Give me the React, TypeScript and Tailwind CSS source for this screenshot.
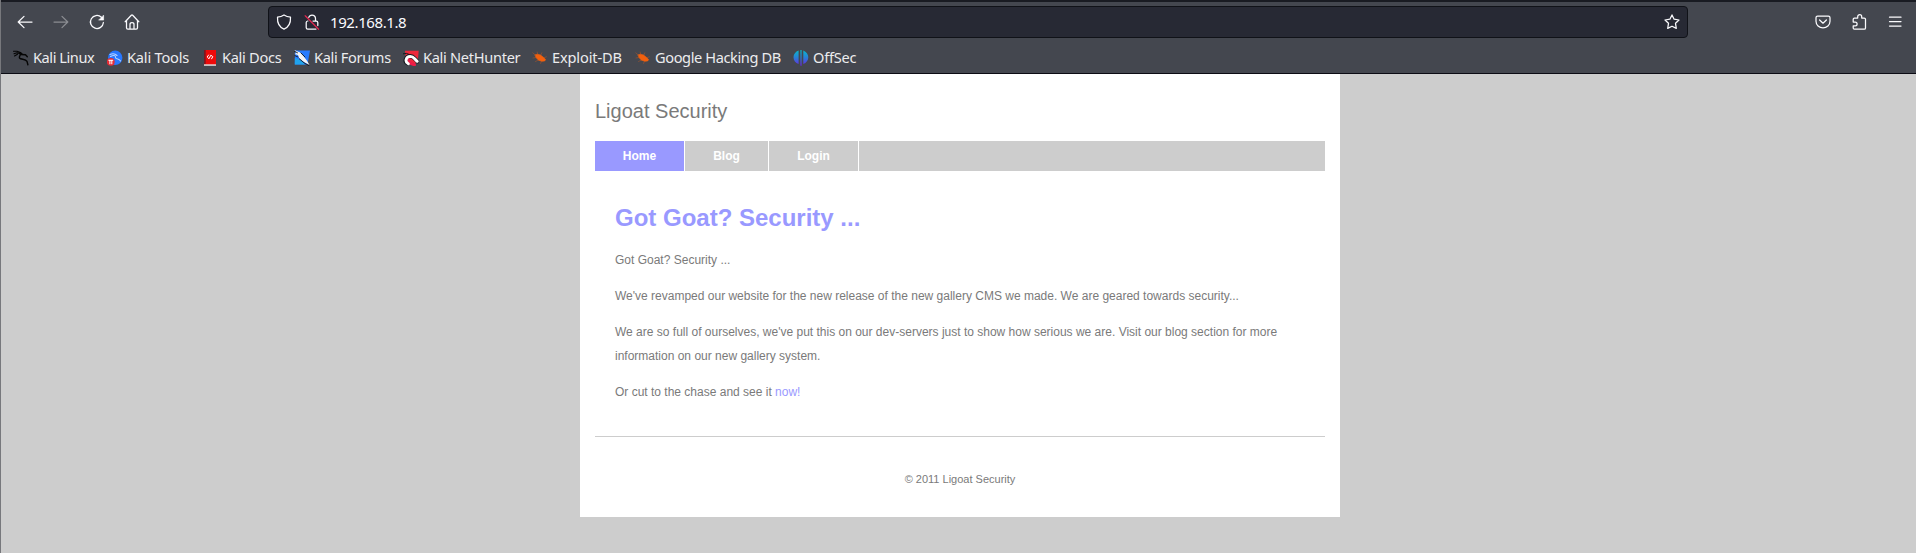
import type { ReactNode } from "react";

const stroke = {
  fill: "none",
  stroke: "currentColor",
  strokeWidth: 1.25,
  strokeLinecap: "round" as const,
  strokeLinejoin: "round" as const,
};

function Icon({ children, className = "" }: { children: ReactNode; className?: string }) {
  return (
    <svg viewBox="0 0 16 16" className={`h-4 w-4 shrink-0 ${className}`} {...stroke}>
      {children}
    </svg>
  );
}

const dragon = (
  <>
    <path d="M0.5 1.2 4 1.3 7.5 2.5 9.5 4.5M1 3.8 4 2.8 7 3.6M1.5 6 4.5 4.2" stroke="#050505" strokeWidth="1.1" />
    <path d="M7 3.2C8.5 5.5 5.5 6 6.5 8 8 9.8 12.5 8.8 14 11.4L14.9 14.8M8 4.5 12.5 4.8 14.3 6.8" stroke="#050505" strokeWidth="1.4" />
  </>
);

const beetle = (
  <g stroke="#f2600e" strokeWidth="0.6">
    <path d="M3.2 4.8 5.5 4.2 8.5 5 11.6 7.4 13.6 9.6 12.8 10.9 10 11.3 6.5 10.2 4.2 7.8Z" fill="#f2600e" />
    <path d="M3.2 5 .8 2.8M5.6 4.2 5.2 2M8.8 5 9.8 2.8M4.2 7.5 1 8M6.5 10 3.5 11.5M9.5 11 8.6 13.4M12 7.8 14.4 6.8" opacity=".55" />
  </g>
);

const bookmarks: { label: string; width: string; text: string; icon: ReactNode }[] = [
  { label: "Kali Linux", width: "w-[94px]", text: "ml-1 tracking-[-0.45px]", icon: dragon },
  {
    label: "Kali Tools",
    width: "w-[96px]",
    text: "ml-1 tracking-[-0.2px]",
    icon: (
      <g stroke="none">
        <circle cx="8.2" cy="7.8" r="7.2" fill="#2777ff" />
        <path d="M3 4.5C6 3.2 8.5 4 10 5.5M3.5 6.5C8 4.2 8.5 6 8.7 8 10 9.5 12.5 8.5 13.5 11" fill="none" stroke="#b9d4ff" strokeWidth="1.1" />
        <circle cx="3.8" cy="11.8" r="3.9" fill="#e62b35" />
        <path d="M1.8 10.3H5.8M2.9 10.3V13.8M4.8 10.3V13.8" stroke="#fff" strokeWidth="1" />
      </g>
    ),
  },
  {
    label: "Kali Docs",
    width: "w-[91px]",
    text: "ml-[3px] tracking-[-0.3px]",
    icon: (
      <g stroke="none">
        <path d="M1 0H13V15H1Z" fill="#ed0a0a" />
        <path d="M1 0H2.7V14H1Z" fill="#7d1820" />
        <path d="M1 14.3H13V15.8H1Z" fill="#dedede" />
        <path d="M5.6 5 4.2 7 6 8.8 7.8 5.2 9.8 6.6 8.6 8.8" fill="none" stroke="#fff" strokeWidth="1" />
      </g>
    ),
  },
  {
    label: "Kali Forums",
    width: "w-[109px]",
    text: "ml-[4px] tracking-[-0.35px]",
    icon: (
      <g stroke="none">
        <path d="M1 .5H16L13.5 14.5H.8Z" fill="#277bff" />
        <path d="M.8 8 7 10 11 14.5H.8Z" fill="#20a4ee" />
        <path d="M.2 0 6.2 2.6 9.5 6.2 13 10.8 15.5 15 10 12 5.2 8.2 4 5 .5 4 2.5 3Z" fill="#f4f4f4" />
        <path d="M0 1 3.5 2.8M1 5.7 4 7M5.3 8.8 10 12.8 15 15.7M7 3 11 7" fill="none" stroke="#15191f" strokeWidth=".9" />
      </g>
    ),
  },
  {
    label: "Kali NetHunter",
    width: "w-[129px]",
    text: "ml-1 tracking-[-0.3px]",
    icon: (
      <g stroke="none">
        <path d="M2 .8H15.7L14.8 11 11 14.6H3.5Z" fill="#ed283b" />
        <path d="M.4 3.8 3.4 3.4 6 4.4" fill="none" stroke="#15191f" strokeWidth="1" />
        <path d="M4.6 13.4C.8 11.4 2.8 6.4 7.2 6.2 10.8 6.2 11.4 9 14.4 11.3" fill="none" stroke="#15191f" strokeWidth="4.2" />
        <path d="M6 9.6C5.5 12 8 13.8 11.5 14.8" fill="none" stroke="#ed1c48" strokeWidth="3" />
        <path d="M5.3 13.8C1.4 11.8 3 6.6 7.2 6.4 10.8 6.4 11.3 9 14.2 11.3" fill="none" stroke="#fff" strokeWidth="2.9" />
      </g>
    ),
  },
  { label: "Exploit-DB", width: "w-[103px]", text: "ml-1 tracking-[-0.15px]", icon: beetle },
  { label: "Google Hacking DB", width: "w-[158px]", text: "ml-1 tracking-[-0.4px]", icon: beetle },
  {
    label: "OffSec",
    width: "w-[80px]",
    text: "ml-1 tracking-[-0.25px]",
    icon: (
      <g stroke="none" fill="url(#offsec)">
        <defs>
          <linearGradient id="offsec" x1="0" y1="0" x2="0" y2="16" gradientUnits="userSpaceOnUse">
            <stop offset="0" stopColor="#06bccb" />
            <stop offset=".5" stopColor="#2b7cd6" />
            <stop offset="1" stopColor="#6d20e6" />
          </linearGradient>
        </defs>
        <path d="M5.6.4V14C2.5 12.8.5 10.4.5 7.2S2.5 1.6 5.6.4M10.3.4C13.3 1.6 15.3 4.2 15.3 7.2S13.3 12.8 10.3 14Z" />
        <path d="M7.4 0H8.6V15.8H7.4Z" />
      </g>
    ),
  },
];

function Toolbar() {
  return (
    <div className="flex h-[36px] items-center text-[#fbfbfe]">
      <Icon className="ml-4"><path d="M1.2 8H15M7 2.4 1.2 8 7 13.6" /></Icon>
      <Icon className="ml-5 text-[#8b8d92]"><path d="M1 8H14.8M9 2.4 14.8 8 9 13.6" /></Icon>
      <Icon className="ml-5">
        <path d="M12.4 3.3A6.5 6.5 0 1 0 14.4 8.5" />
        <path d="M14.6 1.5V6.1H10Z" fill="currentColor" strokeWidth=".6" />
      </Icon>
      <Icon className="ml-[19px]">
        <path d="M1.2 7.7 7.3 1.3Q8 .7 8.7 1.3L14.8 7.7M2.5 6.7V13.7Q2.5 15 3.8 15H12.2Q13.5 15 13.5 13.7V6.7M6 14.8V10.5Q6 8.7 8 8.7T10 10.5V14.8" />
      </Icon>
      <div className="ml-[128px] flex h-8 w-[1420px] items-center rounded-[4px] border border-[#101218] bg-[#272934] pr-[7px] pl-[7px]">
        <Icon>
          <path d="M8 .9C6 2.2 3.9 2.9 1.5 3.2 1.2 8.6 3.2 13 8 15.1 12.8 13 14.8 8.6 14.5 3.2 12.1 2.9 10 2.2 8 .9Z" />
        </Icon>
        <Icon className="ml-3">
          <path d="M4.8 3.4C5.3 1.9 6.5 1 8 1a3.5 3.5 0 0 1 3.5 3.5V7M9 7H12.2Q13.8 7 13.8 8.6V11.5M3.8 7Q2.2 7.2 2.2 8.6V13.4Q2.2 15 3.8 15H12" />
          <path d="M1.2 1.8 14.6 15.3" stroke="#e22850" />
        </Icon>
        <span className="ml-[10px] text-[15px] leading-none tracking-[-0.4px] text-[#fbfbfe]">192.168.1.8</span>
        <Icon className="ml-auto">
          <path d="M8 .9 10.1 5.2 15 6 11.5 9.3 12.3 14.4 8 12.2 3.7 14.4 4.5 9.3 1 6 5.9 5.2Z" />
        </Icon>
      </div>
      <Icon className="ml-[127px]">
        <path d="M2.6 2.2H13.4Q15 2.2 15 3.8V7.3A7 6.6 0 0 1 1 7.3V3.8Q1 2.2 2.6 2.2ZM4.6 6 8 9.2 11.4 6" />
      </Icon>
      <Icon className="ml-5">
        <path d="M2.2 8V5.2Q2.2 4 3.4 4H6.7V2.7a2 2 0 0 1 4 0V4H13.2Q14.5 4 14.5 5.3V13.9Q14.5 15.2 13.2 15.2H3.4Q2.2 15.2 2.2 14V11.8H4.2a1.9 1.9 0 0 0 0-3.8Z" />
      </Icon>
      <Icon className="ml-5"><path d="M2.5 3.2H14M2.5 7.6H14M2.5 12H14" /></Icon>
    </div>
  );
}

function BookmarkBar() {
  return (
    <div className="flex h-[35px] items-center text-[14.6px] text-[#ececee]">
      <div className="w-3 shrink-0" />
      {bookmarks.map((b) => (
        <div key={b.label} className={`flex shrink-0 items-center whitespace-nowrap ${b.width}`}>
          <Icon>{b.icon}</Icon>
          <span className={`leading-none ${b.text}`}>{b.label}</span>
        </div>
      ))}
    </div>
  );
}

export default function App() {
  return (
    <div className="flex h-[553px] w-[1916px] flex-col overflow-hidden border-l border-[#77787c] bg-[#cdcdcd]">
      <header className="h-[74px] shrink-0 border-t-2 border-b border-t-[#191b22] border-b-[#0c0c14] bg-[#44474f] pt-[2px] font-['Noto_Sans',sans-serif]">
        <Toolbar />
        <BookmarkBar />
      </header>
      <main className="ml-[579px] h-[443px] w-[760px] shrink-0 bg-white px-[15px] font-['Liberation_Sans',Arial,sans-serif] text-xs text-[#7a7a7a]">
        <h1 className="pt-[25px] text-[20px] leading-6">Ligoat Security</h1>
        <nav className="mt-[18px] flex h-[30px] bg-[#cdcdcd] leading-[30px] font-bold text-white">
          <a className="w-[90px] border-r border-white bg-[#9999ff] text-center">Home</a>
          <a className="w-[84px] border-r border-white text-center">Blog</a>
          <a className="w-[90px] border-r border-white text-center">Login</a>
        </nav>
        <section className="px-5 pt-[31px] leading-6">
          <h2 className="text-2xl leading-8 font-bold text-[#9999ff]">Got Goat? Security ...</h2>
          <p className="mt-[14px]">Got Goat? Security ...</p>
          <p className="mt-3">We've revamped our website for the new release of the new gallery CMS we made. We are geared towards security...</p>
          <p className="mt-3">We are so full of ourselves, we've put this on our dev-servers just to show how serious we are. Visit our blog section for more information on our new gallery system.</p>
          <p className="mt-3">Or cut to the chase and see it <a className="text-[#9999ff]">now!</a></p>
        </section>
        <footer className="mt-8 border-t border-[#cdcdcd] pt-[30px] text-center text-[11px] leading-6">© 2011 Ligoat Security</footer>
      </main>
    </div>
  );
}
